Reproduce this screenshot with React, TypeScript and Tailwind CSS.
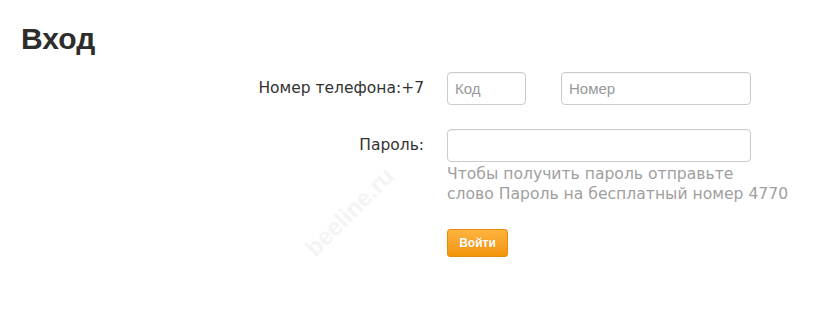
import { useState } from 'react';

/**
 * Login form: phone number + password
 */
export default function App() {
  const [code, setCode] = useState('');
  const [phone, setPhone] = useState('');
  const [password, setPassword] = useState('');

  const inputClass =
    'h-[33px] rounded-[4px] border border-[#cccccc] bg-white px-[7px] text-[15px] text-[#333] placeholder:text-[#999] outline-none shadow-[inset_0_1px_1px_rgba(0,0,0,0.04)]';

  return (
    <div className="relative h-[319px] w-[818px] overflow-hidden bg-white font-['DejaVu_Sans',sans-serif] text-[#333]">
      <h1 className="px-[21px] pt-[21px] font-['Liberation_Sans',Arial,sans-serif] text-[30px] font-bold leading-[36px] text-[#2d2d2d]">
        Вход
      </h1>

      {/* Form */}
      <div className="mt-[15px] grid grid-cols-[424px_1fr] gap-x-[23px]">
        {/* Phone */}
        <label className="self-center text-right text-[15.5px] text-[#333]">
          Номер телефона:+7
        </label>
        <div className="flex gap-[35px]">
          <input
            value={code}
            onChange={(e) => setCode(e.target.value)}
            placeholder="Код"
            className={`${inputClass} w-[79px] font-['Liberation_Sans',Arial,sans-serif]`}
          />
          <input
            value={phone}
            onChange={(e) => setPhone(e.target.value)}
            placeholder="Номер"
            className={`${inputClass} w-[190px] font-['Liberation_Sans',Arial,sans-serif]`}
          />
        </div>

        {/* Password */}
        <label className="mt-[24px] flex h-[33px] items-center justify-end text-[15.5px] text-[#333]">
          Пароль:
        </label>
        <div className="mt-[24px]">
          <input
            type="password"
            value={password}
            onChange={(e) => setPassword(e.target.value)}
            className={`${inputClass} w-[304px]`}
          />
          <p className="mt-[2px] text-[15.6px] leading-[20px] text-[#a0a0a0]">
            Чтобы получить пароль отправьте
            <br />
            слово Пароль на бесплатный номер 4770
          </p>
          <button className="mt-[25px] h-[28px] w-[61px] rounded-[3px] border border-[#e58b0c] bg-gradient-to-b from-[#fdb43c] to-[#f39406] font-['Liberation_Sans',Arial,sans-serif] text-[12px] font-bold text-white [text-shadow:0_0_1px_rgba(180,90,0,0.4)]">
            Войти
          </button>
        </div>
      </div>

      {/* Watermark */}
      <div className="pointer-events-none absolute left-[293px] top-[198px] -rotate-[45deg] font-['Liberation_Sans',Arial,sans-serif] text-[24px] font-bold leading-[28px] text-[#f4f4f4]">
        beeline.ru
      </div>
    </div>
  );
}
